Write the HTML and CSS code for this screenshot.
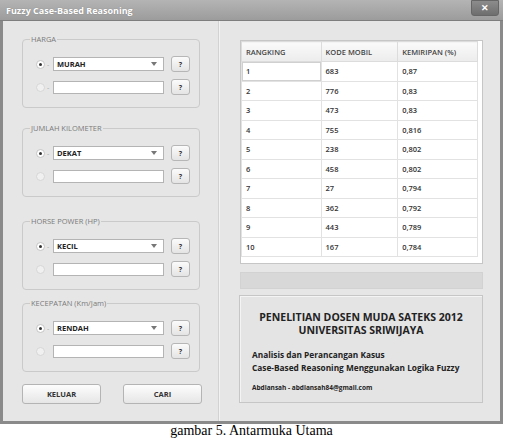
FILE: index.html
```html
<!DOCTYPE html>
<html lang="id">

<head>
    <meta charset="UTF-8">
    <title>Fuzzy Case-Based Reasoning</title>
    <link rel="stylesheet" href="styles.css">
</head>

<body>

    <div class="window">
        <div class="titlebar">
            <span class="title">Fuzzy Case-Based Reasoning</span>
            <span class="close">&#x2715;</span>
        </div>

        <div class="content">
            <!-- panel kiri: input kriteria -->
            <div class="left">
                <div class="group g1">
                    <span class="legend">HARGA</span>
                    <div class="row">
                        <span class="radio on"></span><span class="dash">-</span>
                        <div class="combo">MURAH<span class="arrow"></span></div>
                        <button class="ask">?</button>
                    </div>
                    <div class="row">
                        <span class="radio"></span><span class="dash">-</span>
                        <div class="field"></div>
                        <button class="ask">?</button>
                    </div>
                </div>

                <div class="group g2">
                    <span class="legend">JUMLAH KILOMETER</span>
                    <div class="row">
                        <span class="radio on"></span><span class="dash">-</span>
                        <div class="combo">DEKAT<span class="arrow"></span></div>
                        <button class="ask">?</button>
                    </div>
                    <div class="row">
                        <span class="radio"></span><span class="dash"></span>
                        <div class="field"></div>
                        <button class="ask">?</button>
                    </div>
                </div>

                <div class="group g3">
                    <span class="legend">HORSE POWER (HP)</span>
                    <div class="row">
                        <span class="radio on"></span><span class="dash">-</span>
                        <div class="combo">KECIL<span class="arrow"></span></div>
                        <button class="ask">?</button>
                    </div>
                    <div class="row">
                        <span class="radio"></span><span class="dash"></span>
                        <div class="field"></div>
                        <button class="ask">?</button>
                    </div>
                </div>

                <div class="group g4">
                    <span class="legend">KECEPATAN (Km/Jam)</span>
                    <div class="row">
                        <span class="radio on"></span><span class="dash">-</span>
                        <div class="combo">RENDAH<span class="arrow"></span></div>
                        <button class="ask">?</button>
                    </div>
                    <div class="row">
                        <span class="radio"></span><span class="dash"></span>
                        <div class="field"></div>
                        <button class="ask">?</button>
                    </div>
                </div>

                <div class="actions">
                    <button class="btn">KELUAR</button>
                    <button class="btn">CARI</button>
                </div>
            </div>

            <!-- panel kanan: hasil -->
            <div class="right">
                <div class="grid">
                    <table id="hasil">
                        <thead>
                            <tr>
                                <th>RANGKING</th>
                                <th>KODE MOBIL</th>
                                <th>KEMIRIPAN (%)</th>
                            </tr>
                        </thead>
                        <tbody>
                            <tr class="first"><td>1</td><td>683</td><td>0,87</td></tr>
                            <tr><td>2</td><td>776</td><td>0,83</td></tr>
                            <tr><td>3</td><td>473</td><td>0,83</td></tr>
                            <tr><td>4</td><td>755</td><td>0,816</td></tr>
                            <tr><td>5</td><td>238</td><td>0,802</td></tr>
                            <tr><td>6</td><td>458</td><td>0,802</td></tr>
                            <tr><td>7</td><td>27</td><td>0,794</td></tr>
                            <tr><td>8</td><td>362</td><td>0,792</td></tr>
                            <tr><td>9</td><td>443</td><td>0,789</td></tr>
                            <tr><td>10</td><td>167</td><td>0,784</td></tr>
                        </tbody>
                    </table>
                </div>

                <div class="progress"></div>

                <div class="info">
                    <div class="head">PENELITIAN DOSEN MUDA SATEKS 2012<br>UNIVERSITAS SRIWIJAYA</div>
                    <div class="sub">Analisis dan Perancangan Kasus<br>Case-Based Reasoning Menggunakan Logika Fuzzy</div>
                    <div class="mail">Abdiansah - abdiansah84@gmail.com</div>
                </div>
            </div>
        </div>
    </div>

    <p class="caption">gambar 5. Antarmuka Utama</p>

</body>

</html>
```

FILE: styles.css
```css
body {
    margin: 0;
    background: #fff;
    font-family: "Open Sans", Arial, sans-serif;
}

.window {
    width: 503px;
    height: 424px;
    box-sizing: border-box;
    border: 3px solid #8a8a8a;
    border-top: none;
    background: #e6e6e6;
    display: flex;
    flex-direction: column;
}

.titlebar {
    height: 21px;
    margin: 0 -3px;
    background: linear-gradient(#b4b4b4, #9c9c9c);
    border-bottom: 1px solid #7e7e7e;
    display: flex;
    align-items: center;
    justify-content: space-between;
    padding: 0 4px 0 6px;
    box-sizing: border-box;
}

.title {
    color: #fff;
    font-weight: bold;
    font-size: 9px;
    text-shadow: 0 0 1px #777;
}

.close {
    width: 26px;
    height: 14px;
    margin-top: -4px;
    background: linear-gradient(#8c8c8c, #6e6e6e);
    border: 1px solid #666;
    border-radius: 0 0 3px 3px;
    color: #fff;
    font-size: 9px;
    font-weight: bold;
    text-align: center;
    line-height: 14px;
}

.content {
    flex: 1;
    display: flex;
}

.left {
    width: 216px;
    border-right: 1px solid #d2d2d2;
    padding: 18px 0 0 19px;
    box-sizing: border-box;
}

.right {
    flex: 1;
    padding: 19px 0 0 20px;
    border-left: 1px solid #f2f2f2;
}

/* grup input */
.group {
    width: 178px;
    height: 69px;
    box-sizing: border-box;
    padding: 16px 0 0 13px;
    border: 1px solid #cacaca;
    border-radius: 4px;
    position: relative;
}

.legend {
    position: absolute;
    top: -5px;
    left: 7px;
    background: #e6e6e6;
    font-size: 7.5px;
    color: #7a7a7a;
    padding: 0 1px;
    line-height: 9px;
}

.g2 {
    margin-top: 20px;
}

.g3 {
    margin-top: 24px;
}

.g4 {
    margin-top: 13px;
}

.row {
    display: flex;
    align-items: center;
    height: 16px;
    margin-bottom: 7px;
}

.radio {
    width: 7px;
    height: 7px;
    border-radius: 50%;
    background: #f0f0f0;
    border: 1px solid #d6d6d6;
    position: relative;
}

.radio.on {
    background: #fff;
    border-color: #c4c4c4;
}

.radio.on::after {
    content: "";
    position: absolute;
    left: 2px;
    top: 2px;
    width: 3px;
    height: 3px;
    border-radius: 50%;
    background: #333;
}

.dash {
    width: 8px;
    font-size: 7px;
    color: #aaa;
    padding-left: 2px;
    box-sizing: border-box;
}

.combo,
.field {
    width: 111px;
    height: 14px;
    box-sizing: border-box;
    background: #fff;
    border: 1px solid #b4b4b4;
    font-size: 7.5px;
    font-weight: bold;
    color: #222;
    padding-left: 3px;
    line-height: 12px;
    position: relative;
}

.field {
    height: 13px;
}

.arrow {
    position: absolute;
    right: 6px;
    top: 4px;
    border-left: 3.5px solid transparent;
    border-right: 3.5px solid transparent;
    border-top: 4px solid #777;
}

.ask {
    width: 19px;
    height: 16px;
    margin-left: 7px;
    padding: 0;
    background: linear-gradient(#fbfbfb, #e4e4e4);
    border: 1px solid #b6b6b6;
    border-radius: 3px;
    font-family: "Open Sans", Arial, sans-serif;
    font-size: 7px;
    font-weight: bold;
    color: #333;
}

.actions {
    display: flex;
    gap: 22px;
    margin-top: 12px;
}

.btn {
    width: 79px;
    height: 20px;
    padding: 0;
    background: linear-gradient(#fdfdfd, #e6e6e6);
    border: 1px solid #b4b4b4;
    border-radius: 3px;
    font-family: "Open Sans", Arial, sans-serif;
    font-size: 7.5px;
    font-weight: bold;
    color: #333;
}

/* tabel hasil */
.grid {
    width: 243px;
    height: 224px;
    box-sizing: border-box;
    background: #fff;
    border: 1px solid #c6c6c6;
}

table {
    width: 237px;
    border-collapse: collapse;
    font-size: 7.5px;
    color: #333;
}

th,
td {
    border: 1px solid #e2e2e2;
    text-align: left;
    padding: 0 4px;
    height: 18.5px;
    width: 78px;
    font-weight: 600;
}

th {
    height: 19px;
    background: linear-gradient(#fafafa, #ececec);
    border-color: #dcdcdc;
    font-weight: 600;
    color: #444;
}

tr.first td:first-child {
    box-shadow: inset 0 0 0 1px #d0d0d0;
}

.progress {
    width: 243px;
    height: 17px;
    margin-top: 8px;
    background: #d8d8d8;
    border: 1px solid #d2d2d2;
    box-sizing: border-box;
}

.info {
    width: 244px;
    height: 108px;
    margin: 6px 0 0 -1px;
    box-sizing: border-box;
    background: #e4e4e4;
    border: 1px solid #c6c6c6;
    box-shadow: 1px 1px 0 #f4f4f4 inset;
    padding: 15px 0 0 12px;
    color: #222;
    font-weight: bold;
}

.head {
    text-align: center;
    font-size: 10.5px;
    line-height: 13px;
    margin-left: -12px;
}

.sub {
    font-size: 8.3px;
    line-height: 13px;
    margin-top: 11px;
}

.mail {
    font-size: 6.5px;
    margin-top: 9px;
}

.caption {
    margin: 0;
    text-align: center;
    width: 503px;
    font-family: "Liberation Serif", "Times New Roman", serif;
    font-size: 14px;
    line-height: 14px;
}
```
